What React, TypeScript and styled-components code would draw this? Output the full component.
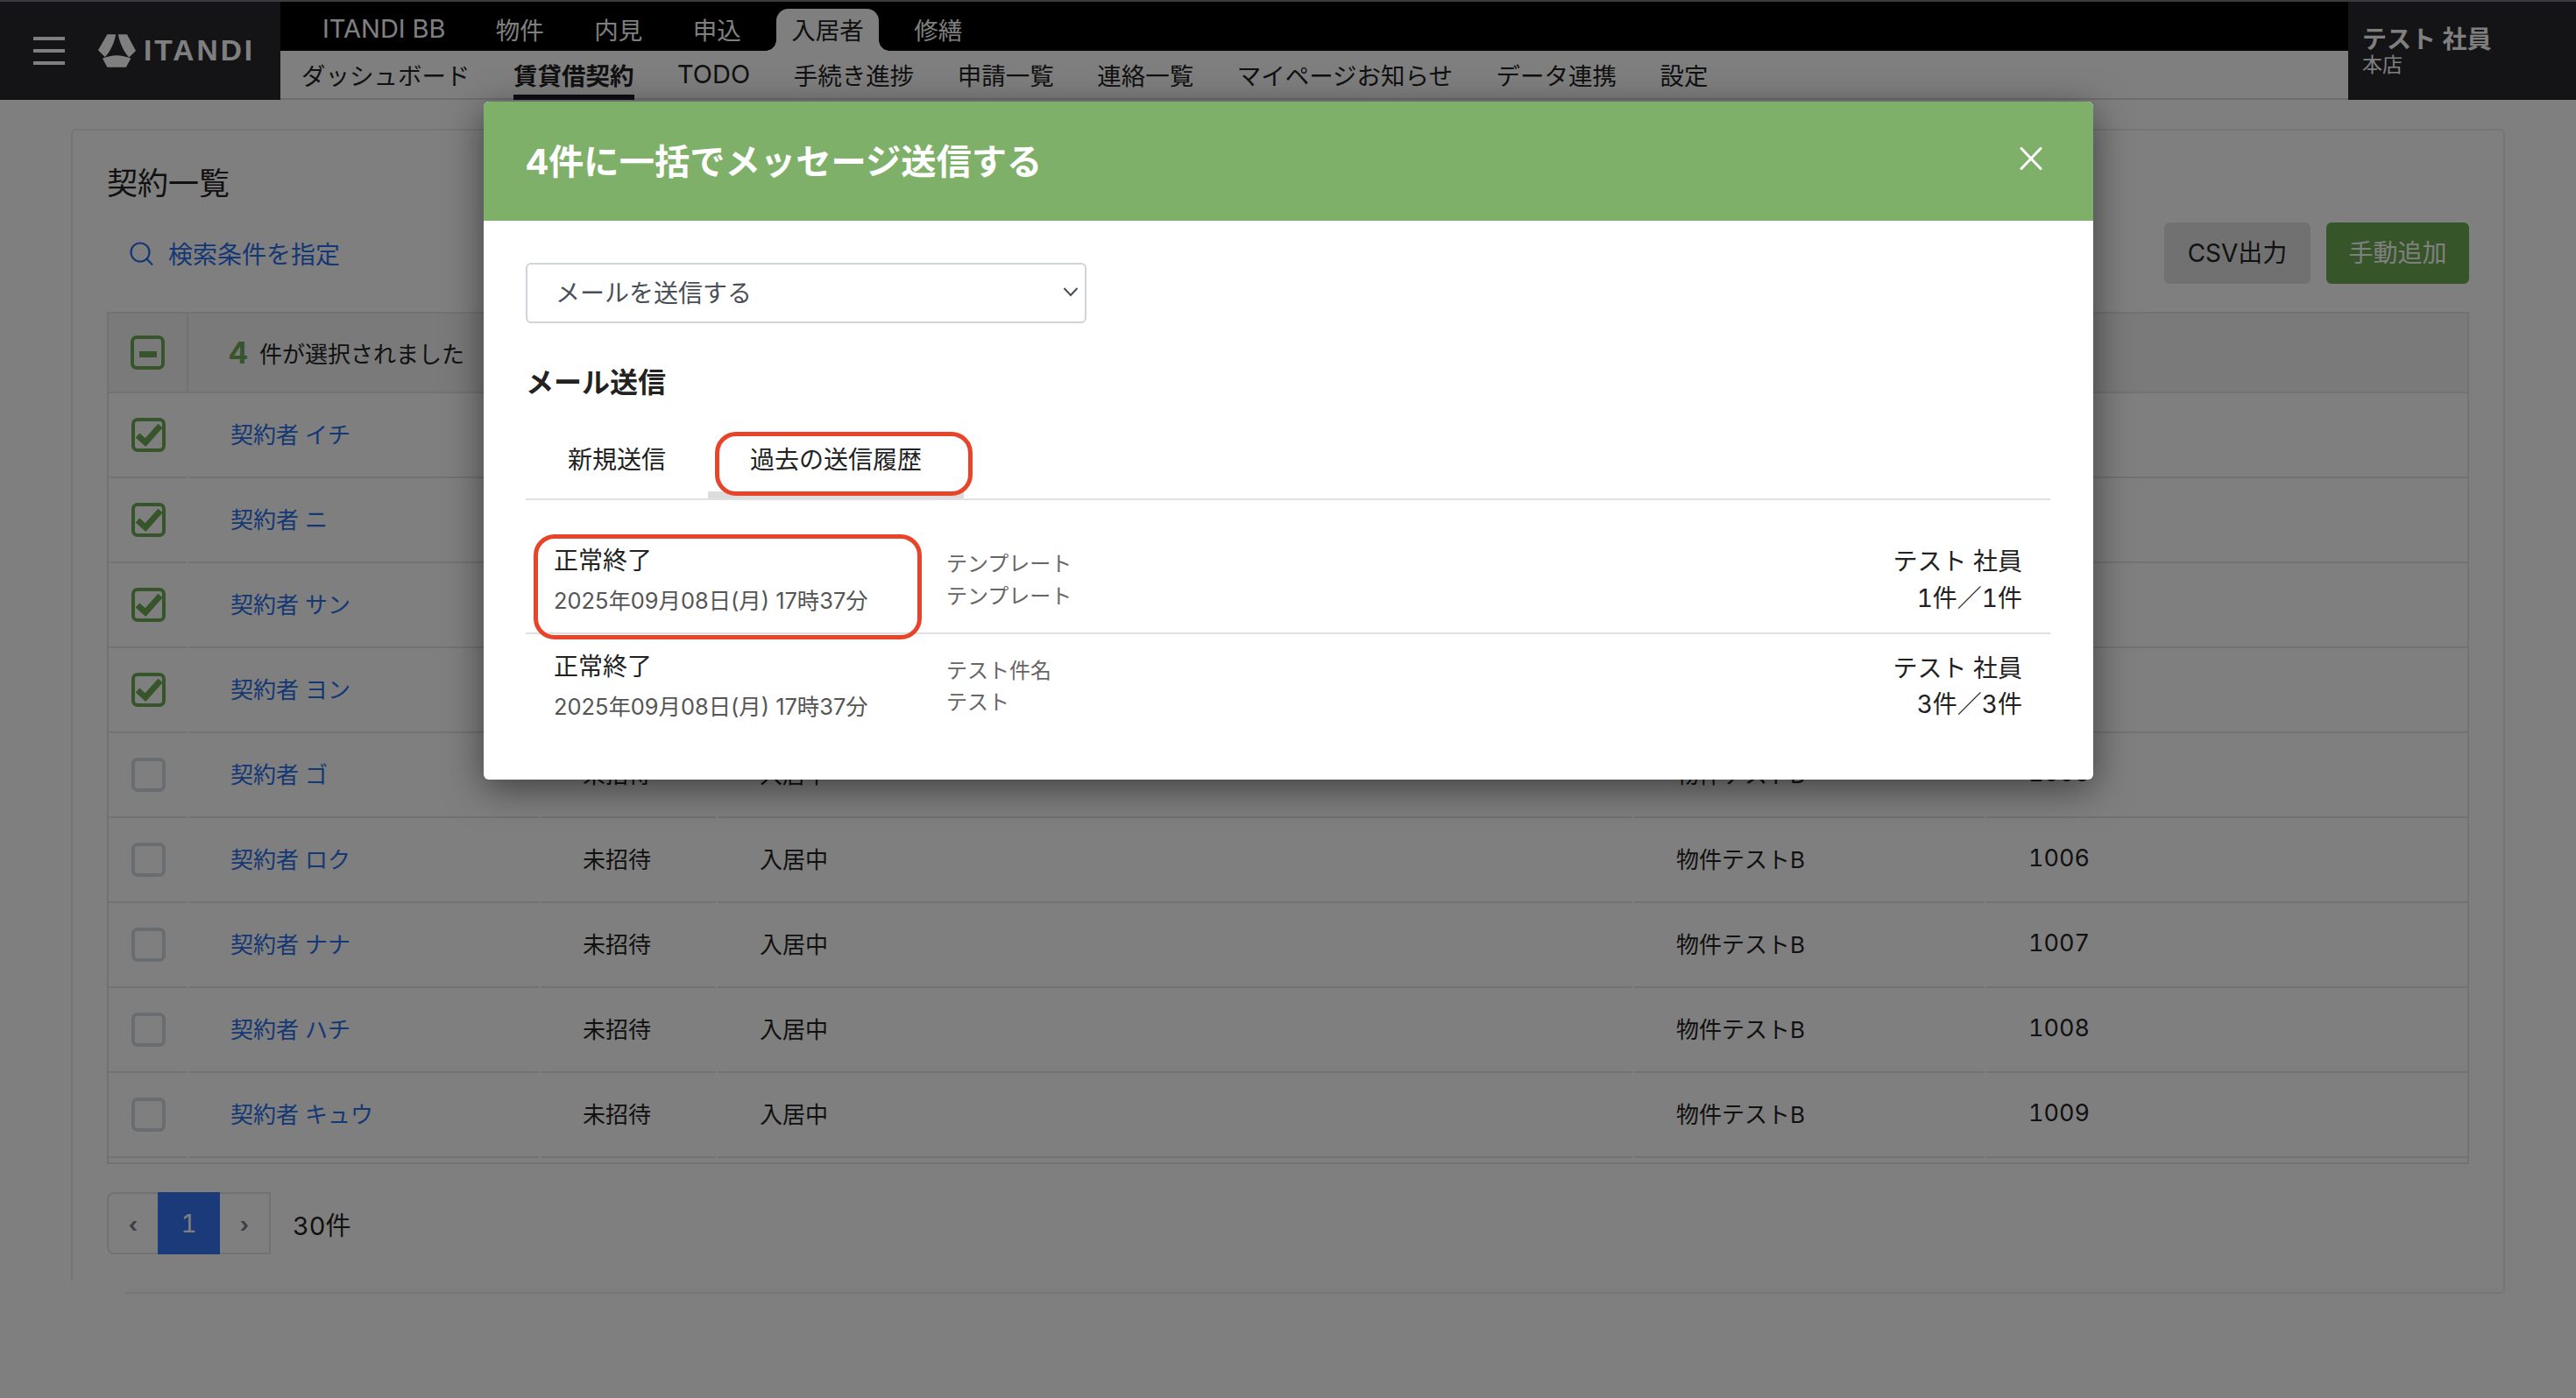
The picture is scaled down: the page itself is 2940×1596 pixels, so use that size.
import React from "react"
import styled, { createGlobalStyle } from "styled-components"

const FONT = `Inter, "Noto Sans CJK JP", sans-serif`

const TOP_NAV = ["ITANDI BB", "物件", "内見", "申込", "入居者", "修繕"]
const SUB_NAV = [
  "ダッシュボード",
  "賃貸借契約",
  "TODO",
  "手続き進捗",
  "申請一覧",
  "連絡一覧",
  "マイページお知らせ",
  "データ連携",
  "設定",
]
const CONTRACTS = [
  { name: "契約者 イチ", room: "1001", checked: true },
  { name: "契約者 ニ", room: "1002", checked: true },
  { name: "契約者 サン", room: "1003", checked: true },
  { name: "契約者 ヨン", room: "1004", checked: true },
  { name: "契約者 ゴ", room: "1005", checked: false },
  { name: "契約者 ロク", room: "1006", checked: false },
  { name: "契約者 ナナ", room: "1007", checked: false },
  { name: "契約者 ハチ", room: "1008", checked: false },
  { name: "契約者 キュウ", room: "1009", checked: false },
]
const HISTORY = [
  { subject: "テンプレート", body: "テンプレート", count: "1件／1件" },
  { subject: "テスト件名", body: "テスト", count: "3件／3件" },
]

const isLatin = (label: string) => /^[A-Z]/.test(label)

const GlobalStyle = createGlobalStyle`
  html, body {
    margin: 0;
    padding: 0;
    background: #fff;
  }
  body {
    font-family: ${FONT};
    font-variant-numeric: tabular-nums;
    color: #222;
  }
  * {
    box-sizing: border-box;
  }
`

const Page = styled.div`
  height: 1596px;
  overflow: hidden;
  position: relative;
`

const Header = styled.header`
  border-top: 2px solid #74747f;
  display: flex;
  height: 114px;
`

const Brand = styled.div`
  align-items: center;
  background: #28282f;
  display: flex;
  flex: 0 0 320px;
  padding-left: 38px;
`

const Hamburger = styled.div`
  display: flex;
  flex-direction: column;
  gap: 10px;
  margin-right: 38px;
  width: 36px;

  span {
    background: #fff;
    display: block;
    height: 4px;
  }
`

const LogoText = styled.span`
  color: #fff;
  font-family: "Liberation Sans", sans-serif;
  font-size: 33.5px;
  font-weight: 700;
  letter-spacing: 3px;
  margin-left: 9px;
`

const NavArea = styled.div`
  display: flex;
  flex: 1;
  flex-direction: column;
`

const TopNav = styled.nav`
  align-items: flex-end;
  background: #000;
  display: flex;
  gap: 57.5px;
  height: 56px;
  padding-left: 48px;
`

const TopItem = styled.div<{ $active?: boolean; $latin?: boolean }>`
  align-items: center;
  background: ${p => (p.$active ? "#fff" : "transparent")};
  border-radius: 14px 14px 0 0;
  color: ${p => (p.$active ? "#222" : "#fff")};
  display: flex;
  font-size: ${p => (p.$latin ? "29px" : "27.5px")};
  height: 48px;
  margin: ${p => (p.$active ? "0 -17px" : "0")};
  padding: ${p => (p.$active ? "0 17px 3px" : "0 0 3px")};
  position: relative;

  ${p =>
    p.$active &&
    `
    &::before, &::after {
      bottom: 0;
      content: "";
      height: 12px;
      position: absolute;
      width: 12px;
    }
    &::before {
      background: radial-gradient(circle at 0 0, transparent 11.5px, #fff 12px);
      left: -12px;
    }
    &::after {
      background: radial-gradient(circle at 100% 0, transparent 11.5px, #fff 12px);
      right: -12px;
    }
  `}
`

const SubNav = styled.nav`
  background: #fff;
  box-shadow: inset 0 -2px 0 #dcdcdc;
  display: flex;
  gap: 49.5px;
  height: 56px;
  padding-left: 24px;
`

const SubItem = styled.div<{ $active?: boolean; $latin?: boolean }>`
  align-items: center;
  box-shadow: ${p => (p.$active ? "inset 0 -6px 0 #1a1a28" : "none")};
  color: #222;
  display: flex;
  font-size: ${p => (p.$latin ? "29px" : "27.5px")};
  font-weight: ${p => (p.$active ? 700 : 400)};
  padding-bottom: 3px;
`

const UserBox = styled.div`
  background: #28282f;
  color: #fff;
  display: flex;
  flex: 0 0 260px;
  flex-direction: column;
  padding: 26px 0 0 16px;
`

const UserName = styled.div`
  font-size: 28px;
  font-weight: 700;
  line-height: 34px;
`

const UserBranch = styled.div`
  font-size: 23px;
  line-height: 24px;
`

const Main = styled.main`
  padding: 33px 81px 0 81px;
`

const Card = styled.section`
  border: 2px solid #ebebeb;
  border-radius: 6px;
  height: 1330px;
  padding: 38px 39px 0;
`

const CardTitle = styled.h1`
  font-size: 35px;
  font-weight: 400;
  line-height: 44px;
  margin: 0;
`

const Toolbar = styled.div`
  align-items: center;
  display: flex;
  gap: 18px;
  height: 70px;
  margin-top: 23px;
`

const SearchLink = styled.div`
  align-items: center;
  color: #2a6fe8;
  display: flex;
  font-size: 28px;
  gap: 17px;
  margin-left: 26px;
  margin-right: auto;
`

const ToolButton = styled.button<{ $primary?: boolean }>`
  background: ${p => (p.$primary ? "#6caa52" : "#e2e2e2")};
  border: 0;
  border-radius: 6px;
  color: ${p => (p.$primary ? "#fff" : "#222")};
  font-family: ${FONT};
  font-size: 28px;
  height: 70px;
  padding: 0 0 5px;
  width: ${p => (p.$primary ? "163px" : "167px")};
`

const Table = styled.div`
  border: 2px solid #e4e4e4;
  margin-top: 32px;
  padding-bottom: 5px;
`

const HeadRow = styled.div`
  align-items: stretch;
  background: #f5f5f5;
  border-bottom: 2px solid #e4e4e4;
  display: flex;
  height: 91px;
`

const HeadCheck = styled.div`
  align-items: center;
  border-right: 2px solid #e4e4e4;
  display: flex;
  flex: 0 0 91px;
  justify-content: center;
`

const SelectedInfo = styled.div`
  align-items: center;
  display: flex;
  font-size: 26px;
  gap: 13px;
  padding-left: 46px;
`

const SelectedCount = styled.span`
  color: #6faa54;
  font-size: 34px;
  font-weight: 700;
`

const Row = styled.div`
  display: grid;
  grid-template-columns: 89px 400px 200px 1044px 400px 1fr;
  column-gap: 2px;
  height: 97px;
`

const Cell = styled.div`
  align-items: center;
  border-bottom: 2px solid #e4e4e4;
  display: flex;
  font-size: 26px;
  padding: 0 0 4px 48px;
  white-space: nowrap;
`

const CheckCell = styled(Cell)`
  justify-content: center;
  padding: 0 0 0 1px;
`

const RoomCell = styled(Cell)`
  font-size: 27px;
`

const NameLink = styled.span`
  color: #2a6fe8;
`

const Checkbox = styled.div<{ $on?: boolean }>`
  align-items: center;
  border: 4px solid ${p => (p.$on ? "#6faa54" : "#d2dae2")};
  border-radius: 7px;
  display: flex;
  height: 39px;
  justify-content: center;
  width: 39px;
`

const MinusBar = styled.span`
  background: #6faa54;
  display: block;
  height: 7px;
  margin-top: 3px;
  width: 20px;
`

const Pagination = styled.div`
  align-items: center;
  display: flex;
  margin-top: 32px;
`

const Pager = styled.div`
  border: 2px solid #e4e4e4;
  border-radius: 8px 0 0 8px;
  display: flex;
  height: 71px;
  width: 187px;
`

const PagerArrow = styled.span`
  align-items: center;
  color: #7a7a90;
  display: flex;
  flex: 1;
  font-size: 24px;
  font-weight: 700;
  justify-content: center;
  padding-top: 3px;
`

const PagerCurrent = styled.span`
  align-items: center;
  background: #3474f4;
  color: #fff;
  display: flex;
  flex: 0 0 71px;
  font-size: 28px;
  justify-content: center;
  margin: -2px 0;
`

const TotalCount = styled.span`
  font-size: 29px;
  margin-left: 25px;
`

const CornerPatch = styled.div`
  background: #fff;
  bottom: 0;
  height: 133px;
  left: 0;
  position: absolute;
  width: 143px;
`

const Backdrop = styled.div`
  background: rgba(0, 0, 0, 0.5);
  inset: 0;
  position: absolute;
`

const Modal = styled.div`
  background: #fff;
  border-radius: 6px;
  box-shadow: 0 10px 44px rgba(0, 0, 0, 0.5);
  height: 774px;
  left: 552px;
  overflow: hidden;
  position: absolute;
  top: 116px;
  width: 1837px;
`

const ModalHeader = styled.div`
  align-items: center;
  background: #7fb069;
  color: #fff;
  display: flex;
  height: 136px;
  justify-content: space-between;
  padding: 0 58px 6px 48px;
`

const ModalTitle = styled.h2`
  font-size: 40.3px;
  font-weight: 700;
  margin: 0;
`

const ModalBody = styled.div`
  padding: 48px 49px 0 48px;
`

const SelectBox = styled.div`
  align-items: center;
  border: 2px solid #cfd3da;
  border-radius: 6px;
  color: #4a4f57;
  display: flex;
  font-size: 28px;
  height: 69px;
  justify-content: space-between;
  padding: 0 7px 3px 32px;
  width: 640px;
`

const SectionTitle = styled.h3`
  font-size: 32px;
  font-weight: 700;
  line-height: 44px;
  margin: 46px 0 0;
`

const TabList = styled.div`
  border-bottom: 2px solid #e0e0e0;
  display: flex;
  margin-top: 20px;
`

const Tab = styled.div<{ $active?: boolean }>`
  align-items: center;
  box-shadow: ${p => (p.$active ? "inset 0 -8px 0 #dcdcdc" : "none")};
  display: flex;
  font-size: 28px;
  height: 90px;
  padding: 0 48px 3px;
`

const HistoryList = styled.div`
  margin-top: 32px;
`

const HistoryRow = styled.div<{ $divider?: boolean }>`
  align-items: center;
  border-bottom: ${p => (p.$divider ? "2px solid #e0e0e0" : "0")};
  display: flex;
  height: ${p => (p.$divider ? "121px" : "120px")};
  padding: 0 32px;
`

const StatusColumn = styled.div`
  flex: 0 0 448px;
`

const StatusText = styled.div`
  font-size: 28px;
  line-height: 46px;
`

const DateText = styled.div`
  color: #555;
  font-size: 25.4px;
  font-variant-numeric: normal;
  line-height: 46px;
`

const SubjectColumn = styled.div`
  color: #666;
  flex: 1;
  font-size: 24px;
  line-height: 36.5px;
`

const SenderColumn = styled.div`
  font-size: 28px;
  line-height: 41.5px;
  text-align: right;
`

const Annotation = styled.div<{ $x: number; $y: number; $w: number; $h: number }>`
  border: 5px solid #e8442a;
  border-radius: 24px;
  height: ${p => p.$h}px;
  left: ${p => p.$x}px;
  position: absolute;
  top: ${p => p.$y}px;
  width: ${p => p.$w}px;
`

const LogoMark = () => (
  <svg width="43" height="38" viewBox="37 28 128 112" fill="#fff">
    <path d="M68 28 L97 28 C92 55 80 85 60 105 L37 82 Z" />
    <path d="M105 28 L135 28 L165 84 L142 106 C122 85 110 55 105 28 Z" />
    <path d="M52 110 C85 96 115 96 148 110 L132 140 L68 140 Z" />
  </svg>
)

const SearchIcon = () => (
  <svg width="27" height="27" viewBox="0 0 27 27" fill="none" stroke="#2a6fe8" strokeWidth="2.2">
    <circle cx="12" cy="12" r="10.5" />
    <path d="M19.5 19.5 L26 26.5" />
  </svg>
)

const CheckMark = () => (
  <svg width="31" height="31" viewBox="0 0 31 31" fill="none" stroke="#6faa54" strokeWidth="7">
    <path d="M3 16 L12 24 L29 5" />
  </svg>
)

const CloseIcon = () => (
  <svg width="26" height="26" viewBox="0 0 26 26" fill="none" stroke="#fff" strokeWidth="3" strokeLinecap="round">
    <path d="M2 1.5 L24 24.5 M24 1.5 L2 24.5" />
  </svg>
)

const Chevron = () => (
  <svg width="18" height="12" viewBox="0 0 18 12" fill="none" stroke="#4a4f57" strokeWidth="2">
    <path d="M1.5 2 L9 10 L16.5 2" />
  </svg>
)

const App = () => (
  <Page>
    <GlobalStyle />
    <Header>
      <Brand>
        <Hamburger>
          <span />
          <span />
          <span />
        </Hamburger>
        <LogoMark />
        <LogoText>ITANDI</LogoText>
      </Brand>
      <NavArea>
        <TopNav>
          {TOP_NAV.map(item => (
            <TopItem key={item} $active={item === "入居者"} $latin={isLatin(item)}>
              {item}
            </TopItem>
          ))}
        </TopNav>
        <SubNav>
          {SUB_NAV.map(item => (
            <SubItem key={item} $active={item === "賃貸借契約"} $latin={isLatin(item)}>
              {item}
            </SubItem>
          ))}
        </SubNav>
      </NavArea>
      <UserBox>
        <UserName>テスト 社員</UserName>
        <UserBranch>本店</UserBranch>
      </UserBox>
    </Header>
    <Main>
      <Card>
        <CardTitle>契約一覧</CardTitle>
        <Toolbar>
          <SearchLink>
            <SearchIcon />
            検索条件を指定
          </SearchLink>
          <ToolButton>CSV出力</ToolButton>
          <ToolButton $primary>手動追加</ToolButton>
        </Toolbar>
        <Table>
          <HeadRow>
            <HeadCheck>
              <Checkbox $on>
                <MinusBar />
              </Checkbox>
            </HeadCheck>
            <SelectedInfo>
              <SelectedCount>4</SelectedCount>
              件が選択されました
            </SelectedInfo>
          </HeadRow>
          {CONTRACTS.map(contract => (
            <Row key={contract.room}>
              <CheckCell>
                <Checkbox $on={contract.checked}>{contract.checked && <CheckMark />}</Checkbox>
              </CheckCell>
              <Cell>
                <NameLink>{contract.name}</NameLink>
              </Cell>
              <Cell>未招待</Cell>
              <Cell>入居中</Cell>
              <Cell>物件テストB</Cell>
              <RoomCell>{contract.room}</RoomCell>
            </Row>
          ))}
        </Table>
        <Pagination>
          <Pager>
            <PagerArrow>‹</PagerArrow>
            <PagerCurrent>1</PagerCurrent>
            <PagerArrow>›</PagerArrow>
          </Pager>
          <TotalCount>30件</TotalCount>
        </Pagination>
      </Card>
    </Main>
    <CornerPatch />
    <Backdrop />
    <Modal>
      <ModalHeader>
        <ModalTitle>4件に一括でメッセージ送信する</ModalTitle>
        <CloseIcon />
      </ModalHeader>
      <ModalBody>
        <SelectBox>
          メールを送信する
          <Chevron />
        </SelectBox>
        <SectionTitle>メール送信</SectionTitle>
        <TabList>
          <Tab>新規送信</Tab>
          <Tab $active>過去の送信履歴</Tab>
        </TabList>
        <HistoryList>
          {HISTORY.map((entry, index) => (
            <HistoryRow key={entry.subject} $divider={index === 0}>
              <StatusColumn>
                <StatusText>正常終了</StatusText>
                <DateText>2025年09月08日(月) 17時37分</DateText>
              </StatusColumn>
              <SubjectColumn>
                <div>{entry.subject}</div>
                <div>{entry.body}</div>
              </SubjectColumn>
              <SenderColumn>
                <div>テスト 社員</div>
                <div>{entry.count}</div>
              </SenderColumn>
            </HistoryRow>
          ))}
        </HistoryList>
      </ModalBody>
      <Annotation $x={264} $y={377} $w={294} $h={73} />
      <Annotation $x={57} $y={494} $w={443} $h={120} />
    </Modal>
  </Page>
)

export default App
